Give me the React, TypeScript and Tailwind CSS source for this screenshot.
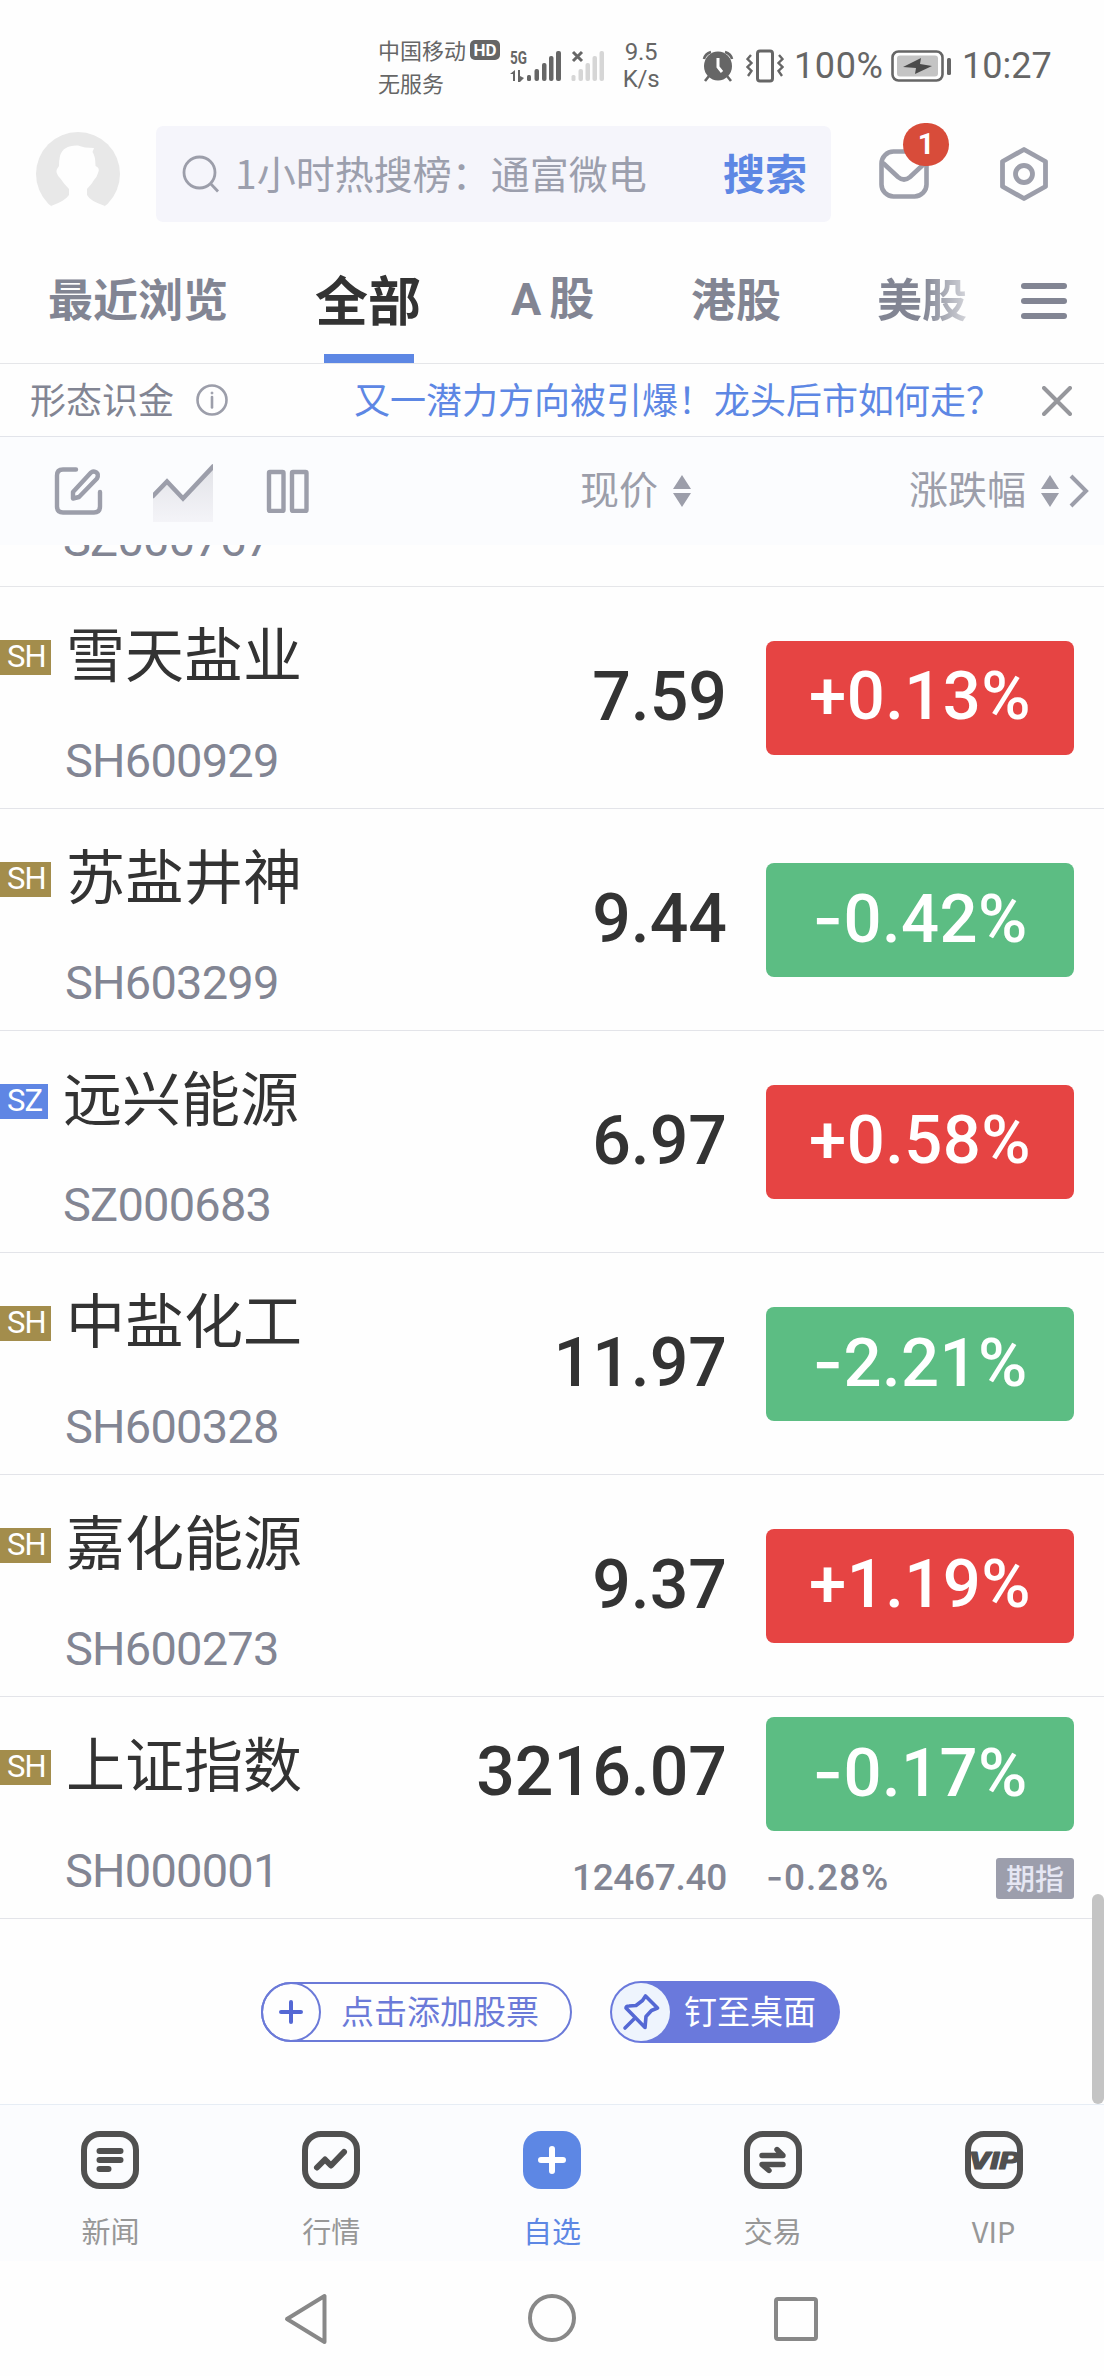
import React from 'react';

type Stock = {
  market: 'SH' | 'SZ';
  name: string;
  code: string;
  price: string;
  change: string;
  futures?: { price: string; change: string };
};

const stocks: Stock[] = [
  { market: 'SH', name: '雪天盐业', code: 'SH600929', price: '7.59', change: '+0.13%' },
  { market: 'SH', name: '苏盐井神', code: 'SH603299', price: '9.44', change: '-0.42%' },
  { market: 'SZ', name: '远兴能源', code: 'SZ000683', price: '6.97', change: '+0.58%' },
  { market: 'SH', name: '中盐化工', code: 'SH600328', price: '11.97', change: '-2.21%' },
  { market: 'SH', name: '嘉化能源', code: 'SH600273', price: '9.37', change: '+1.19%' },
  {
    market: 'SH',
    name: '上证指数',
    code: 'SH000001',
    price: '3216.07',
    change: '-0.17%',
    futures: { price: '12467.40', change: '-0.28%' },
  },
];

const StatusBar = () => (
  <div className="flex h-[126px] items-center pt-[6px] pl-[378px] text-[#666]">
    <div className="w-[132px] text-[22px] leading-[33px]">
      <div className="flex items-center">
        中国移动
        <span className="ml-[4px] flex h-[20px] w-[30px] items-center justify-center rounded-[5px] bg-[#666] font-['Roboto',sans-serif] text-[17px] leading-[20px] font-bold text-white">
          HD
        </span>
      </div>
      <div>无服务</div>
    </div>
    <svg width="51" height="32" viewBox="0 0 51 32" fill="#666">
      <text x="0" y="14" fontSize="18" fontWeight="700" fontFamily="Roboto, sans-serif" textLength="17" lengthAdjust="spacingAndGlyphs">5G</text>
      <path d="M5 20v11H3v-7H0zM8 20h2v6l4 2-4 4H8z" />
      <rect x="17" y="25" width="4" height="6" rx="1.5" />
      <rect x="24.500" y="19" width="4.500" height="12" rx="2" />
      <rect x="32" y="13" width="4.500" height="18" rx="2" />
      <rect x="39" y="6" width="4.500" height="25" rx="2" />
      <rect x="46" y="1" width="5" height="30" rx="2" />
    </svg>
    <svg className="ml-[10px]" width="34" height="32" viewBox="0 0 34 32" fill="#d6d6d6">
      <path d="M2 2l9 9M11 2l-9 9" stroke="#666" strokeWidth="3" />
      <rect x="0.500" y="25" width="4" height="6" rx="1.500" />
      <rect x="7.500" y="19" width="4.500" height="12" rx="2" />
      <rect x="14.500" y="13" width="4.500" height="18" rx="2" />
      <rect x="21.500" y="6" width="4.500" height="25" rx="2" />
      <rect x="28.500" y="1" width="4.500" height="30" rx="2" />
    </svg>
    <div className="ml-[15px] w-[42px] text-center font-['Roboto',sans-serif] text-[24px] leading-[27px] tracking-[-0.3px]">
      <div>9.5</div>
      <div>K/s</div>
    </div>
    <svg className="ml-[40px]" width="32" height="32" viewBox="0 0 32 32">
      <path d="M2 9Q3 4 9 2M30 9q-1-5-7-7M7 26l-4 5M25 26l4 5" fill="none" stroke="#666" strokeWidth="2.600" />
      <ellipse cx="16" cy="16" rx="14" ry="14.500" fill="#666" />
      <path d="M16 8v9l4 5" fill="none" stroke="#fff" strokeWidth="3" />
    </svg>
    <svg className="ml-[12px]" width="38" height="34" viewBox="0 0 38 34" fill="none" stroke="#666" strokeWidth="3">
      <rect x="11.500" y="2" width="15" height="30" rx="2.500" />
      <path d="M5 6L1.500 10l4 4-4 4 4 4-3.500 5M33 6l3.500 4-4 4 4 4-4 4 3.500 5" strokeWidth="2.400" />
    </svg>
    <div className="ml-[10px] w-[97px] font-['Roboto',sans-serif] text-[36px] leading-[40px] tracking-[0.6px]">100%</div>
    <svg width="61" height="32" viewBox="0 0 61 32">
      <rect x="1.500" y="1.500" width="50" height="29" rx="6" fill="#fff" stroke="#666" strokeWidth="2.600" />
      <rect x="6" y="5.500" width="41" height="21" rx="3" fill="#c4c4c4" />
      <path d="M12 17l18-9-1 6 12 2-17 8 1-6z" fill="#4a4a4a" />
      <rect x="56" y="8" width="4" height="17" rx="1.500" fill="#666" />
    </svg>
    <div className="ml-[10px] font-['Roboto',sans-serif] text-[36px] leading-[40px]">10:27</div>
  </div>
);

const SearchHeader = () => (
  <div className="flex h-[96px] items-center pl-[36px]">
    <svg width="84" height="84" viewBox="0 0 84 84">
      <circle cx="42" cy="42" r="42" fill="#e8e8e8" />
      <path
        d="M24 24Q27 13 42 13.500q6 2.500 16 2.500l-1.500 4q3 4 3 14 5 2 2.500 7-1 4-4 7-2 4-7 9v6q3 6 18 11L64 84H20l-5-10q14-5 18-11v-6q-5-5-9-11-5-5-3-9l2-3q0-6 1-10z"
        fill="#fefefe"
      />
    </svg>
    <div className="ml-[36px] flex h-[96px] w-[675px] items-center rounded-[7px] bg-[#f5f5fb] pr-[24px] pl-[26px]">
      <svg width="38" height="38" viewBox="0 0 38 38" fill="none" stroke="#9c9eaa" strokeWidth="2.800">
        <circle cx="17.500" cy="17.500" r="15.500" />
        <path d="M28 28l8 8.500" />
      </svg>
      <span className="mb-[4px] ml-[15px] text-[39px] leading-[56px] whitespace-nowrap text-[#9c9fad]">1小时热搜榜：通富微电</span>
      <span className="mb-[4px] ml-auto text-[42px] leading-[56px] font-bold text-[#5d87e4]">搜索</span>
    </div>
    <div className="relative ml-[47px] h-[52px] w-[52px]">
      <svg width="52" height="52" viewBox="0 0 52 52" fill="none" stroke="#9c9eaa" strokeWidth="4.600">
        <rect x="3.500" y="3.500" width="45" height="45" rx="12" />
        <path d="M5 15l15 14q6 5 12 0l15-14" />
      </svg>
      <span className="absolute -top-[25px] left-[25px] flex h-[43px] w-[46px] items-center justify-center rounded-full bg-[#d84c3a] font-['Roboto',sans-serif] text-[29px] font-bold text-white">
        1
      </span>
    </div>
    <svg className="ml-[69px]" width="50" height="56" viewBox="0 0 50 56" fill="none" stroke="#9c9eaa" strokeWidth="4.800" strokeLinejoin="round">
      <path d="M25 3.500l21.500 12v25L25 52.500 3.500 40.500v-25z" />
      <circle cx="25" cy="28" r="8.500" />
    </svg>
  </div>
);

const Tabs = () => (
  <div className="flex h-[142px] items-center border-b border-[#e5e6e9] pt-[10px] text-[45px] leading-[60px] font-bold text-[#828593]">
    <span className="ml-[48px] w-[267px]">最近浏览</span>
    <span className="relative flex h-full w-[196px] items-center text-[53px] text-[#333]">
      全部
      <span className="absolute bottom-0 left-[9px] h-[9px] w-[90px] bg-[#5d87e4]" />
    </span>
    <span className="w-[180px]">
      <span className="mr-[8px] font-['Roboto',sans-serif]">A</span>股
    </span>
    <span className="w-[186px]">港股</span>
    <span className="w-[92px] bg-linear-to-r from-[#828593] from-50% to-[#d8d9de] bg-clip-text text-transparent">美股</span>
    <span className="mt-[7px] ml-[52px] flex flex-col gap-[9px]">
      <span className="h-[6px] w-[46px] rounded-full bg-[#828593]" />
      <span className="h-[6px] w-[46px] rounded-full bg-[#828593]" />
      <span className="h-[6px] w-[46px] rounded-full bg-[#828593]" />
    </span>
  </div>
);

const Notice = () => (
  <div className="flex h-[73px] items-center border-b border-[#e2e4ea] pl-[30px] text-[36px] leading-[50px]">
    <span className="mb-[4px] text-[#828593]">形态识金</span>
    <svg className="ml-[22px]" width="32" height="32" viewBox="0 0 32 32" fill="none" stroke="#9c9eaa" strokeWidth="2.600">
      <circle cx="16" cy="16" r="14.500" />
      <path d="M16 13v10.500" strokeLinecap="round" />
      <circle cx="16" cy="9" r="1" fill="#9c9eaa" strokeWidth="1" />
    </svg>
    <span className="mb-[4px] ml-[126px] whitespace-nowrap text-[#5d87e4]">又一潜力方向被引爆！龙头后市如何走？</span>
    <svg className="mt-[2px] mr-[32px] ml-auto" width="30" height="30" viewBox="0 0 30 30" stroke="#96979c" strokeWidth="4" strokeLinecap="round">
      <path d="M2 2l26 26M28 2L2 28" />
    </svg>
  </div>
);

const SortIcon = () => (
  <svg width="18" height="34" viewBox="0 0 18 34" fill="#9c9eaa">
    <path d="M9 1l9 14H0zM9 33l9-14H0z" />
  </svg>
);

const ListHeader = () => (
  <div className="flex h-[108px] items-center bg-[#fbfcfe] pl-[54px] text-[39px] leading-[54px] text-[#9c9eaa]">
    <svg width="49" height="50" viewBox="0 0 49 50" fill="none" stroke="#9c9eaa" strokeWidth="4.400" strokeLinecap="round" strokeLinejoin="round">
      <path d="M22 3.500H9Q3 3.500 3 9.500v31q0 6 6 6h31q6 0 6-6V26" />
      <path d="M19 26L37 6.500q3-2 5.500 0t.5 6L25 31l-6 1.500z" />
    </svg>
    <svg className="mt-[4px] ml-[50px]" width="60" height="58" viewBox="0 0 60 58">
      <defs>
        <linearGradient id="trend" x1="0" y1="0" x2="0" y2="1">
          <stop offset="0" stopColor="#e2e3e8" />
          <stop offset="1" stopColor="#f4f4f8" />
        </linearGradient>
      </defs>
      <path d="M0 32l14-14 16 17L60 3v55H0z" fill="url(#trend)" />
      <path d="M-1 33l15-15.500 16 17L61 1.500" fill="none" stroke="#9c9eaa" strokeWidth="4.600" />
    </svg>
    <svg className="ml-[53px]" width="44" height="44" viewBox="0 0 44 44" fill="none" stroke="#9c9eaa" strokeWidth="4.400">
      <rect x="3" y="3" width="14.500" height="39" rx="1" />
      <rect x="26" y="3" width="14.500" height="39" rx="1" />
    </svg>
    <span className="mr-[15px] mb-[8px] ml-[270px]">现价</span>
    <SortIcon />
    <span className="mr-[15px] mb-[8px] ml-[218px]">涨跌幅</span>
    <SortIcon />
    <svg className="ml-[9px]" width="22" height="34" viewBox="0 0 22 34" fill="none" stroke="#9c9eaa" strokeWidth="4">
      <path d="M3 2l15 15L3 32" />
    </svg>
  </div>
);

// the default hyphen is too narrow next to the digits
const Signed = ({ value }: { value: string }) =>
  value.startsWith('-') ? (
    <>
      <span className="font-['Inter',sans-serif]">-</span>
      {value.slice(1)}
    </>
  ) : (
    <>{value}</>
  );

const StockRow = ({ stock }: { stock: Stock }) => {
  const isSH = stock.market === 'SH';
  const isUp = stock.change.startsWith('+');

  return (
    <div className="flex h-[222px] border-b border-[#e3e4e9]">
      <div className="w-[400px]">
        <div className="mt-[29px] flex h-[82px] items-center">
          <span
            className={`flex h-[35px] items-center pl-[7px] font-['Roboto',sans-serif] text-[31px] tracking-[-1px] text-white ${
              isSH ? 'w-[51px] bg-[#a38d4c]' : 'w-[48px] bg-[#5f86e4]'
            }`}
          >
            {stock.market}
          </span>
          <span className="-mt-[11px] ml-[15px] text-[59px] leading-[82px] text-[#333]">{stock.name}</span>
        </div>
        <div
          className={`mt-[35px] font-['Roboto',sans-serif] text-[47px] leading-[56px] tracking-[-0.8px] text-[#828593] ${
            isSH ? 'ml-[65px]' : 'ml-[63px]'
          }`}
        >
          {stock.code}
        </div>
      </div>
      <div className="w-[327px] text-right font-['Roboto',sans-serif] font-medium">
        <div className={`text-[68px] leading-[80px] text-[#333] ${stock.futures ? 'mt-[35px]' : 'mt-[70px]'}`}>{stock.price}</div>
        {stock.futures && (
          <div className="mt-[46px] text-[37px] leading-[40px] tracking-[-0.3px] text-[#828593]">{stock.futures.price}</div>
        )}
      </div>
      <div className="ml-[39px] w-[308px] font-['Roboto',sans-serif] font-medium">
        <div
          className={`flex h-[114px] items-center justify-center rounded-[8px] pb-[3px] text-[67px] tracking-[0.4px] text-white ${
            isUp ? 'bg-[#e64443]' : 'bg-[#5cbd83]'
          } ${stock.futures ? 'mt-[20px]' : 'mt-[54px]'}`}
        >
          <span>
            <Signed value={stock.change} />
          </span>
        </div>
        {stock.futures && (
          <div className="mt-[27px] flex h-[41px] items-center justify-between">
            <span className="mb-[3px] text-[37px] leading-[40px] tracking-[0.9px] text-[#828593]">
              <Signed value={stock.futures.change} />
            </span>
            <span className="flex h-[41px] w-[78px] items-center justify-center rounded-[3px] bg-[#9c9eac] pb-[4px] font-['Noto_Sans_CJK_SC',sans-serif] text-[29px] leading-[38px] text-[#e6e7f3]">
              期指
            </span>
          </div>
        )}
      </div>
    </div>
  );
};

const Actions = () => (
  <div className="flex h-[185px] items-center pl-[261px] text-[33px] leading-[46px]">
    <button className="flex h-[60px] w-[311px] items-center rounded-full border-2 border-[#6b7ad8] text-[#6b7ad8]">
      <span className="-ml-[2px] flex h-[60px] w-[60px] shrink-0 items-center justify-center rounded-full border-2 border-[#6b7ad8]">
        <svg width="24" height="24" viewBox="0 0 24 24" stroke="#5468d4" strokeWidth="4" strokeLinecap="round">
          <path d="M12 2v20M2 12h20" />
        </svg>
      </span>
      <span className="mb-[3px] ml-[20px] whitespace-nowrap">点击添加股票</span>
    </button>
    <button className="ml-[38px] flex h-[62px] w-[230px] items-center rounded-full bg-[#6a79dc] pl-[2px] text-white">
      <span className="flex h-[58px] w-[58px] shrink-0 items-center justify-center rounded-full bg-[#eef4fd]">
        <svg width="38" height="38" viewBox="0 0 38 38" fill="none" stroke="#5468d4" strokeWidth="3.600" strokeLinecap="round" strokeLinejoin="round">
          <path d="M23.500 3L35.500 15l-6 2.500L24 23.500l-1 11L4 15q0-2 3-2l7-.5 6.500-5z" />
          <path d="M13 25L3 35" />
        </svg>
      </span>
      <span className="mb-[3px] ml-[14px] whitespace-nowrap">钉至桌面</span>
    </button>
  </div>
);

const NavFrame = ({ children }: { children: React.ReactNode }) => (
  <svg width="58" height="58" viewBox="0 0 58 58" fill="none" stroke="#505050" strokeWidth="6" strokeLinecap="round" strokeLinejoin="round">
    <rect x="3" y="3" width="52" height="52" rx="16" />
    {children}
  </svg>
);

const navItems = [
  {
    label: '新闻',
    icon: (
      <NavFrame>
        <path d="M18.500 20h21M18.500 29h21M18.500 38h9" />
      </NavFrame>
    ),
  },
  {
    label: '行情',
    icon: (
      <NavFrame>
        <path d="M15 36.500l8-8 6 6L42 21" />
      </NavFrame>
    ),
  },
  {
    label: '自选',
    active: true,
    icon: (
      <svg width="58" height="58" viewBox="0 0 58 58">
        <rect width="58" height="58" rx="18" fill="#5d87e4" />
        <path d="M29 18v22M18 29h22" stroke="#fff" strokeWidth="6" strokeLinecap="round" />
      </svg>
    ),
  },
  {
    label: '交易',
    icon: (
      <NavFrame>
        <path d="M18 24.500h21l-6-6M39 33.500H18l7 6" strokeWidth="5.400" />
      </NavFrame>
    ),
  },
  {
    label: 'VIP',
    icon: (
      <NavFrame>
        <text
          x="4"
          y="38"
          fill="#505050"
          strokeWidth="1.200"
          fontFamily="Roboto, sans-serif"
          fontSize="23"
          fontWeight="800"
          fontStyle="italic"
          textLength="51"
          lengthAdjust="spacingAndGlyphs"
        >
          VIP
        </text>
      </NavFrame>
    ),
  },
];

const BottomNav = () => (
  <div className="grid h-[157px] grid-cols-5 border-t border-[#e6edf5] bg-[#fbfcfe] pt-[26px]">
    {navItems.map((item) => (
      <div key={item.label} className="flex flex-col items-center">
        {item.icon}
        <span className={`mt-[21px] text-[29px] leading-[40px] ${item.active ? 'text-[#5d87e4]' : 'text-[#979797]'}`}>{item.label}</span>
      </div>
    ))}
  </div>
);

const SystemNav = () => (
  <div className="flex h-[115px] pl-[284px]">
    <svg className="mt-[32px]" width="44" height="52" viewBox="0 0 44 52" fill="none" stroke="#888" strokeWidth="4" strokeLinejoin="round">
      <path d="M3 26L40.500 3v46z" />
    </svg>
    <svg className="mt-[33px] ml-[200px]" width="48" height="48" viewBox="0 0 48 48" fill="none" stroke="#888" strokeWidth="4">
      <circle cx="24" cy="24" r="22" />
    </svg>
    <div className="mt-[36px] ml-[198px] h-[44px] w-[44px] rounded-[4px] border-4 border-[#888]" />
  </div>
);

export default function App() {
  return (
    <div className="relative h-[2376px] w-[1104px] overflow-hidden bg-[#fefefe] font-['Noto_Sans_CJK_SC',sans-serif]">
      <StatusBar />
      <SearchHeader />
      <Tabs />
      <Notice />
      <ListHeader />
      {/* row scrolled halfway under the list header */}
      <div className="flex h-[42px] items-end overflow-hidden border-b border-[#e5e6e9] pb-[18px] pl-[63px]">
        <span className="font-['Roboto',sans-serif] text-[47px] leading-[56px] tracking-[-0.8px] text-[#828593]">SZ000767</span>
      </div>
      {stocks.map((stock) => (
        <StockRow key={stock.code} stock={stock} />
      ))}
      <Actions />
      <BottomNav />
      <SystemNav />
      <div className="absolute top-[1894px] right-0 h-[210px] w-[12px] rounded-full bg-[#c4c4c4]" />
    </div>
  );
}
